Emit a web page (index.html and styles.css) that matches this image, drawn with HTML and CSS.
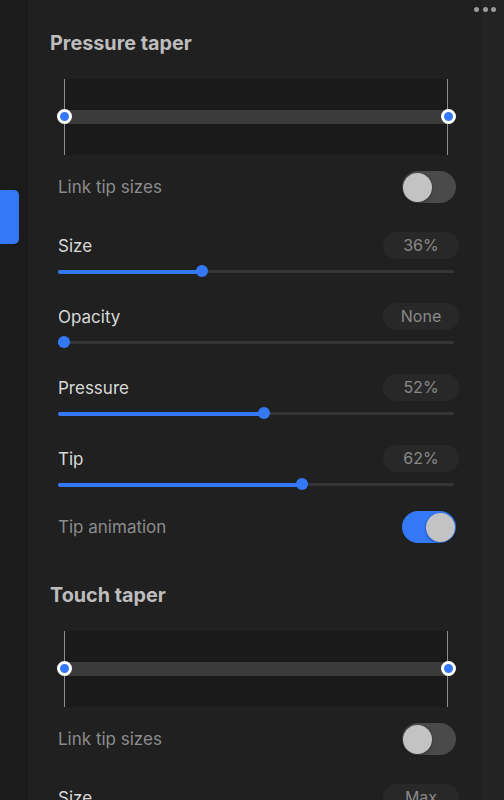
FILE: index.html
```html
<!DOCTYPE html>
<html lang="en">
<head>
    <meta charset="UTF-8">
    <meta name="viewport" content="width=device-width, initial-scale=1.0">
    <title>Brush settings</title>
    <link rel="stylesheet" href="styles.css">
</head>
<body>
    <!-- Левая полоса с активной вкладкой -->
    <aside class="sidebar">
        <div class="tab"></div>
    </aside>

    <main class="panel">
        <div class="more"><span></span><span></span><span></span></div>

        <!-- Pressure taper -->
        <h2 class="heading">Pressure taper</h2>
        <div class="taper">
            <div class="taper-bar"></div>
            <span class="taper-knob left"></span>
            <span class="taper-knob right"></span>
        </div>

        <div class="switch-row">
            <span class="dim">Link tip sizes</span>
            <span class="toggle"></span>
        </div>

        <div class="settings">
            <div class="setting">
                <div class="setting-head"><span>Size</span><span class="pill">36%</span></div>
                <div class="slider" style="--p: 0.36"><span class="fill"></span><span class="knob"></span></div>
            </div>
            <div class="setting">
                <div class="setting-head"><span>Opacity</span><span class="pill">None</span></div>
                <div class="slider" style="--p: 0"><span class="fill"></span><span class="knob"></span></div>
            </div>
            <div class="setting">
                <div class="setting-head"><span>Pressure</span><span class="pill">52%</span></div>
                <div class="slider" style="--p: 0.52"><span class="fill"></span><span class="knob"></span></div>
            </div>
            <div class="setting">
                <div class="setting-head"><span>Tip</span><span class="pill">62%</span></div>
                <div class="slider" style="--p: 0.62"><span class="fill"></span><span class="knob"></span></div>
            </div>
        </div>

        <div class="switch-row after-slider">
            <span class="dim">Tip animation</span>
            <span class="toggle on"></span>
        </div>

        <!-- Touch taper -->
        <h2 class="heading second">Touch taper</h2>
        <div class="taper">
            <div class="taper-bar"></div>
            <span class="taper-knob left"></span>
            <span class="taper-knob right"></span>
        </div>

        <div class="switch-row">
            <span class="dim">Link tip sizes</span>
            <span class="toggle"></span>
        </div>

        <div class="settings">
            <div class="setting">
                <div class="setting-head"><span>Size</span><span class="pill">Max</span></div>
                <div class="slider" style="--p: 1"><span class="fill"></span><span class="knob"></span></div>
            </div>
        </div>
    </main>

    <aside class="rail"></aside>
</body>
</html>
```

FILE: styles.css
```css
body {
    margin: 0;
    height: 800px;
    overflow: hidden;
    display: flex;
    background: #1c1c1c;
    font-family: Inter, 'Open Sans', sans-serif;
    color: #d9d9d9;
}

.sidebar {
    width: 28px;
    flex: none;
    background: #1b1b1b;
    padding-top: 190px;
    box-sizing: border-box;
}

.tab {
    width: 19px;
    height: 54px;
    background: #3478f6;
    border-radius: 0 5px 5px 0;
}

.panel {
    position: relative;
    width: 454px;
    flex: none;
    background: #202020;
    padding: 31px 24px 0 30px;
    box-sizing: border-box;
}

.rail {
    flex: 1;
    background: #232323;
}

/* кнопка-меню из трёх точек */
.more {
    position: absolute;
    top: 7px;
    right: -14px;
    display: flex;
    gap: 3.5px;
    z-index: 5;
}

.more span {
    width: 5px;
    height: 5px;
    border-radius: 50%;
    background: #9a9a9a;
}

.heading {
    margin: 0 0 24px -8px;
    font-size: 19.8px;
    line-height: 24px;
    font-weight: 700;
    color: #bdbdbd;
}

.heading.second {
    margin-top: 40px;
}

/* график нажима */
.taper {
    position: relative;
    margin-left: 6px;
    width: 384px;
    height: 76px;
    padding-top: 31px;
    background: #1a1a1a;
    border-left: 1.5px solid #8e8e8e;
    border-right: 1.5px solid #8e8e8e;
    box-sizing: border-box;
}

.taper-bar {
    height: 14px;
    background: #3b3b3b;
}

.taper-knob {
    position: absolute;
    top: 30px;
    width: 15px;
    height: 15px;
    border-radius: 50%;
    background: #3478f6;
    border: 3px solid #fff;
    box-sizing: border-box;
}

.taper-knob.left { left: -8.5px; }
.taper-knob.right { right: -8.5px; }

.switch-row {
    display: flex;
    justify-content: space-between;
    align-items: center;
    margin: 16px 2px 29px 0;
    font-size: 17px;
}

.switch-row.after-slider {
    margin-top: 21px;
    margin-bottom: 0;
}

.dim {
    color: #8c8c8c;
}

.toggle {
    position: relative;
    width: 54px;
    height: 32px;
    border-radius: 16px;
    background: #4a4a4a;
}

.toggle::after {
    content: '';
    position: absolute;
    top: 1.5px;
    left: 1px;
    width: 29px;
    height: 29px;
    border-radius: 50%;
    background: #c3c3c3;
    box-shadow: 0 1px 3px rgba(0, 0, 0, 0.35);
}

.toggle.on {
    background: #3478f6;
}

.toggle.on::after {
    left: auto;
    right: 1px;
}

.settings {
    display: flex;
    flex-direction: column;
    gap: 26px;
}

.setting-head {
    display: flex;
    justify-content: space-between;
    align-items: center;
    font-size: 17px;
    margin-right: -1px;
}

.pill {
    width: 76px;
    height: 27px;
    line-height: 27px;
    border-radius: 14px;
    background: #282828;
    color: #8a8a8a;
    text-align: center;
    font-size: 16px;
}

.slider {
    position: relative;
    height: 12px;
    margin: 6px 4px 0 0;
}

.slider::before {
    content: '';
    position: absolute;
    left: 0;
    right: 0;
    top: 5px;
    height: 3px;
    border-radius: 2px;
    background: #353535;
}

.slider .fill {
    position: absolute;
    left: 0;
    top: 4.5px;
    height: 4px;
    border-radius: 2px;
    width: calc(6px + var(--p) * (100% - 12px));
    background: #3478f6;
}

.slider .knob {
    position: absolute;
    top: 0;
    left: calc(var(--p) * (100% - 12px));
    width: 12px;
    height: 12px;
    border-radius: 50%;
    background: #3478f6;
}
```
